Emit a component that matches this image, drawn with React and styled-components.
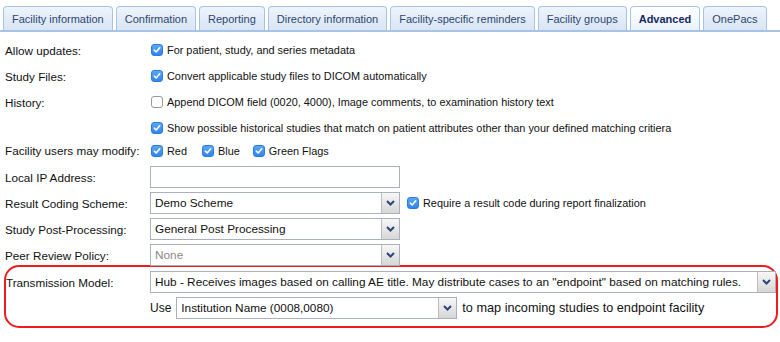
import React from "react";
import styled, { createGlobalStyle } from "styled-components";

const Global = createGlobalStyle`
  html, body { margin: 0; padding: 0; background: #fff; }
  body { font-family: "Liberation Sans", Arial, sans-serif; font-size: 11px; color: #111; }
`;

const Page = styled.div`
  width: 780px;
  height: 342px;
  overflow: hidden;
  background: #fff;
`;

const TabBar = styled.div`
  display: flex;
  gap: 3px;
  padding: 6px 0 0 3px;
  border-bottom: 2px solid #a9c3e6;
`;

const Tab = styled.div`
  height: 24px;
  padding: 0 8px;
  display: flex;
  align-items: center;
  box-sizing: border-box;
  border: 1px solid #a9c3e6;
  border-bottom: none;
  border-radius: 4px 4px 0 0;
  background: ${(p) =>
    p.$active
      ? "linear-gradient(#ffffff, #eaf2fb)"
      : "linear-gradient(#eef4fb, #d8e5f4)"};
  color: ${(p) => (p.$active ? "#17295e" : "#2d4670")};
  font-weight: ${(p) => (p.$active ? "bold" : "normal")};
  white-space: nowrap;
`;

const Form = styled.div`
  padding-top: 5px;
`;

const Row = styled.div`
  display: flex;
  align-items: center;
  height: ${(p) => p.$h || 26}px;
  margin-top: ${(p) => p.$mt || 0}px;
  padding-left: 5px;
`;

const Label = styled.div`
  width: ${(p) => p.$w || 145}px;
  flex: none;
  white-space: nowrap;
  font-size: 11.7px;
`;

const Spacer = styled.div`
  width: ${(p) => p.$w || 145}px;
  flex: none;
`;

const Check = styled.label`
  display: inline-flex;
  align-items: center;
  gap: 4px;
  margin-right: ${(p) => p.$mr || 0}px;
  margin-left: ${(p) => p.$ml || 0}px;
  white-space: nowrap;
  font-size: 10.9px;
`;

const Box = styled.span`
  width: 12px;
  height: 12px;
  box-sizing: border-box;
  border-radius: 3px;
  display: inline-flex;
  align-items: center;
  justify-content: center;
  margin-left: 1px;
  background: ${(p) => (p.$on ? "linear-gradient(#5aa5f7, #2f86ef)" : "#fff")};
  border: 1px solid ${(p) => (p.$on ? "#2b7be0" : "#9a9a9a")};
`;

const Checkbox = ({ on, children, mr, ml }) => (
  <Check $mr={mr} $ml={ml}>
    <Box $on={on}>
      {on && (
        <svg width="8" height="8" viewBox="0 0 8 8">
          <path d="M1.3 4.2 L3.2 6 L6.7 1.8" fill="none" stroke="#fff" strokeWidth="1.6" strokeLinecap="round" strokeLinejoin="round" />
        </svg>
      )}
    </Box>
    <span>{children}</span>
  </Check>
);

const TextInput = styled.div`
  width: 250px;
  height: 22px;
  box-sizing: border-box;
  border: 1px solid #aab0bd;
  background: #fff;
`;

const SelectWrap = styled.div`
  width: ${(p) => p.$w}px;
  height: 22px;
  box-sizing: border-box;
  border: 1px solid #aab0bd;
  background: #fff;
  display: flex;
  align-items: stretch;
  flex: none;
`;

const SelectText = styled.div`
  flex: 1;
  display: flex;
  align-items: center;
  padding-left: 4px;
  font-size: 11.8px;
  color: ${(p) => (p.$muted ? "#8a8a8a" : "#111")};
  white-space: nowrap;
  overflow: hidden;
`;

const Arrow = styled.div`
  width: 17px;
  border-left: 1px solid #b9bcc2;
  background: linear-gradient(#f7f7f7, #d6d6d6);
  display: flex;
  align-items: center;
  justify-content: center;
`;

const Select = ({ w, children, muted }) => (
  <SelectWrap $w={w}>
    <SelectText $muted={muted}>{children}</SelectText>
    <Arrow>
      <svg width="9" height="6" viewBox="0 0 9 6">
        <path d="M1 1 L4.5 4.5 L8 1" fill="none" stroke="#27467d" strokeWidth="2" />
      </svg>
    </Arrow>
  </SelectWrap>
);

const Highlight = styled.div`
  margin: -3px 2px 0 4px;
  border: 2px solid #ee1c1c;
  border-radius: 15px;
  padding: 4px 0 7px 0;
  display: flex;
  flex-direction: column;
  gap: 4px;
`;

const InlineRow = styled.div`
  display: flex;
  align-items: center;
  height: 22px;
`;

const Note = styled.span`
  margin: 0 ${(p) => p.$mr || 0}px 0 ${(p) => p.$ml || 0}px;
  font-size: ${(p) => p.$fs || 12}px;
  white-space: nowrap;
`;

const tabs = [
  "Facility information",
  "Confirmation",
  "Reporting",
  "Directory information",
  "Facility-specific reminders",
  "Facility groups",
  "Advanced",
  "OnePacs",
];

export default function App() {
  return (
    <Page>
      <Global />
      <TabBar>
        {tabs.map((t) => (
          <Tab key={t} $active={t === "Advanced"}>
            {t}
          </Tab>
        ))}
      </TabBar>
      <Form>
        <Row>
          <Label>Allow updates:</Label>
          <Checkbox on>For patient, study, and series metadata</Checkbox>
        </Row>
        <Row>
          <Label>Study Files:</Label>
          <Checkbox on>Convert applicable study files to DICOM automatically</Checkbox>
        </Row>
        <Row>
          <Label>History:</Label>
          <Checkbox>Append DICOM field (0020, 4000), Image comments, to examination history text</Checkbox>
        </Row>
        <Row>
          <Spacer />
          <Checkbox on>Show possible historical studies that match on patient attributes other than your defined matching critiera</Checkbox>
        </Row>
        <Row $h={19}>
          <Label>Facility users may modify:</Label>
          <Checkbox on mr={14}>Red</Checkbox>
          <Checkbox on mr={12}>Blue</Checkbox>
          <Checkbox on>Green Flags</Checkbox>
        </Row>
        <Row $mt={4}>
          <Label>Local IP Address:</Label>
          <TextInput />
        </Row>
        <Row>
          <Label>Result Coding Scheme:</Label>
          <Select w={250}>Demo Scheme</Select>
          <Checkbox on ml={6}>Require a result code during report finalization</Checkbox>
        </Row>
        <Row>
          <Label>Study Post-Processing:</Label>
          <Select w={250}>General Post Processing</Select>
        </Row>
        <Row>
          <Label>Peer Review Policy:</Label>
          <Select w={250} muted>None</Select>
        </Row>
        <Highlight>
          <InlineRow>
            <Label $w={144}>Transmission Model:</Label>
            <Select w={626}>
              Hub - Receives images based on calling AE title. May distribute cases to an "endpoint" based on matching rules.
            </Select>
          </InlineRow>
          <InlineRow>
            <Spacer $w={144} />
            <Note $mr={5}>Use</Note>
            <Select w={281}>Institution Name (0008,0080)</Select>
            <Note $ml={5} $fs={12.7}>to map incoming studies to endpoint facility</Note>
          </InlineRow>
        </Highlight>
      </Form>
    </Page>
  );
}
